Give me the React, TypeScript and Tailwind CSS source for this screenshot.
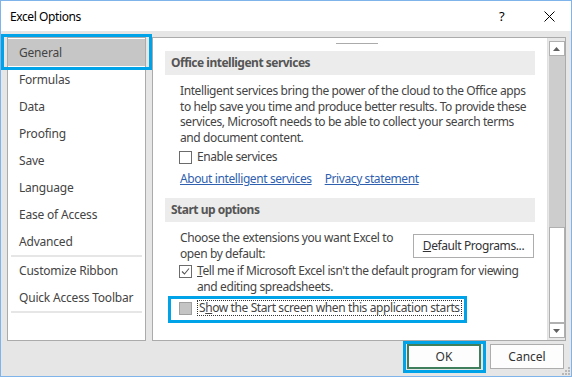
import React from "react";

const font = { fontFamily: '"Noto Sans", "Open Sans", sans-serif' };

function NavItem({ label, active }: { label: string; active?: boolean }) {
  return (
    <div
      className={
        "h-[27px] flex items-center pl-[11px] text-[12px] tracking-[-0.2px] text-[#444444] " +
        (active ? "bg-[#c6c6c6]" : "")
      }
    >
      {label}
    </div>
  );
}

function Checkbox({ checked, filled }: { checked?: boolean; filled?: boolean }) {
  return (
    <div
      className={
        "w-[13px] h-[13px] border flex items-center justify-center shrink-0 " +
        (filled ? "bg-[#c4c4c4] border-[#a0a0a0]" : "bg-white border-[#6b6b6b]")
      }
    >
      {checked && (
        <svg width="11" height="11" viewBox="0 0 11 11">
          <path d="M2 5.5 L4.5 8 L9 2.5" fill="none" stroke="#555" strokeWidth="1.1" />
        </svg>
      )}
    </div>
  );
}

export default function App() {
  return (
    <div
      style={font}
      className="w-[572px] h-[377px] border border-[#7eb4ea] flex flex-col bg-[#e6e6e6] overflow-hidden"
    >
      {/* title bar */}
      <div className="h-[30px] bg-white flex items-center shrink-0 relative">
        <span className="pl-[9px] pt-[1px] text-[12px] tracking-[-0.4px] text-black">Excel Options</span>
        <span className="absolute left-[498px] top-[6px] text-[13px] text-black">?</span>
        <svg className="absolute left-[543px] top-[10px]" width="11" height="11" viewBox="0 0 11 11">
          <path d="M0.5 0.5 L10.5 10.5 M10.5 0.5 L0.5 10.5" stroke="#000" strokeWidth="1" />
        </svg>
      </div>

      {/* body */}
      <div className="flex-1 relative flex flex-col">
        <div className="flex pt-[6px] pl-[6px] gap-[6px]">
          {/* nav */}
          <div className="w-[139px] h-[304px] bg-white border border-[#ababab] pt-[1px]">
            <NavItem label="General" active />
            <NavItem label="Formulas" />
            <NavItem label="Data" />
            <NavItem label="Proofing" />
            <NavItem label="Save" />
            <NavItem label="Language" />
            <NavItem label="Ease of Access" />
            <NavItem label="Advanced" />
            <div className="mx-[3px] h-[2px] bg-[#e6e6e6]" />
            <NavItem label="Customize Ribbon" />
            <NavItem label="Quick Access Toolbar" />
            <div className="mx-[3px] h-[2px] bg-[#e6e6e6]" />
          </div>

          {/* content panel */}
          <div className="w-[414px] h-[304px] bg-white border border-[#ababab] flex">
            <div className="flex-1 min-w-0 overflow-hidden pl-[12px] pr-[12px] text-[12px] tracking-[-0.4px] text-[#444444] whitespace-nowrap">
              <div className="h-[6px] relative">
                <div className="absolute left-[171px] top-[5px] w-[42px] h-[1px] bg-[#ababab]" />
              </div>
              <div className="h-[24px] mt-[7px] bg-[#ececec] flex items-center pl-[6px] font-bold tracking-[-0.5px] text-[#555555]">
                Office intelligent services
              </div>
              <div className="pl-[15px] mt-[8px] leading-[15.5px]">
                Intelligent services bring the power of the cloud to the Office apps
                <br />
                to help save you time and produce better results. To provide these
                <br />
                services, Microsoft needs to be able to collect your search terms
                <br />
                and document content.
              </div>
              <div className="pl-[14px] mt-[3px] flex items-center gap-[5px] h-[18px]">
                <Checkbox />
                <span>Enable services</span>
              </div>
              <div className="pl-[15px] mt-[4px] flex gap-[13px] h-[18px] items-center text-[#2f5faf]">
                <span className="underline">About intelligent services</span>
                <span className="underline">Privacy statement</span>
              </div>
              <div className="h-[24px] mt-[10px] bg-[#ececec] flex items-center pl-[6px] font-bold tracking-[-0.5px] text-[#555555]">
                Start up options
              </div>
              <div className="pl-[15px] mt-[8px] flex justify-between items-start">
                <div className="leading-[15.5px]">
                  Choose the extensions you want Excel to
                  <br />
                  open by default:
                </div>
                <div className="w-[121px] h-[24px] border border-[#adadad] bg-white flex items-center justify-center text-[#333333] mt-[4px] mr-[1px]">
                  <span>
                    <span className="underline">D</span>efault Programs...
                  </span>
                </div>
              </div>
              <div className="pl-[14px] mt-[2px] flex items-start gap-[5px]">
                <div className="mt-[2px]">
                  <Checkbox checked />
                </div>
                <div className="leading-[15.5px]">
                  <span className="underline">T</span>ell me if Microsoft Excel isn't the default program for viewing
                  <br />
                  and editing spreadsheets.
                </div>
              </div>
              <div className="pl-[14px] mt-[6px] flex items-center gap-[5px]">
                <Checkbox filled />
                <span className="border border-dotted border-[#333333] px-[1px] leading-[14px]">
                  S<span className="underline">h</span>ow the Start screen when this application starts
                </span>
              </div>
            </div>

            {/* scrollbar */}
            <div className="w-[18px] h-full bg-[#e8e8e8] border-l border-[#e0e0e0] flex flex-col items-center pt-[3px] pb-[2px]">
              <div className="w-[16px] h-[15px] shrink-0 bg-white border border-[#b0b0b0] flex items-center justify-center">
                <svg width="7" height="4" viewBox="0 0 7 4">
                  <path d="M0 4 L3.5 0 L7 4 Z" fill="#606060" />
                </svg>
              </div>
              <div className="w-[16px] h-[171px] shrink-0 bg-[#cdcdcd]" />
              <div className="w-[16px] flex-1 bg-white border border-[#b0b0b0]" />
              <div className="w-[16px] h-[15px] shrink-0 bg-white border border-[#b0b0b0] flex items-center justify-center">
                <svg width="7" height="4" viewBox="0 0 7 4">
                  <path d="M0 0 L3.5 4 L7 0 Z" fill="#606060" />
                </svg>
              </div>
            </div>
          </div>
        </div>

        {/* buttons */}
        <div className="flex justify-end gap-[9px] pr-[7px] mt-[3px]">
          <div className="w-[74px] h-[25px] border-2 border-[#3f7f5c] bg-[#fdfdfd] flex items-center justify-center text-[12px] text-[#333333]">
            OK
          </div>
          <div className="w-[74px] h-[25px] border border-[#adadad] bg-[#fdfdfd] flex items-center justify-center text-[12px] text-[#333333]">
            Cancel
          </div>
        </div>

        {/* grip */}
        <svg className="absolute right-[1px] bottom-[1px]" width="8" height="8" viewBox="0 0 8 8">
          <rect x="6" y="0" width="2" height="2" fill="#b8b8b8" />
          <rect x="3" y="3" width="2" height="2" fill="#b8b8b8" />
          <rect x="6" y="3" width="2" height="2" fill="#b8b8b8" />
          <rect x="0" y="6" width="2" height="2" fill="#b8b8b8" />
          <rect x="3" y="6" width="2" height="2" fill="#b8b8b8" />
          <rect x="6" y="6" width="2" height="2" fill="#b8b8b8" />
        </svg>

        {/* annotation highlights */}
        <div className="absolute left-[0px] top-[3px] w-[151px] h-[36px] border-[3px] border-[#00a2e8] pointer-events-none" />
        <div className="absolute left-[167px] top-[265px] w-[299px] h-[27px] border-[3px] border-[#00a2e8] pointer-events-none" />
        <div className="absolute left-[402px] top-[310px] w-[83px] h-[32px] border-[3px] border-[#00a2e8] pointer-events-none" />
      </div>
    </div>
  );
}
